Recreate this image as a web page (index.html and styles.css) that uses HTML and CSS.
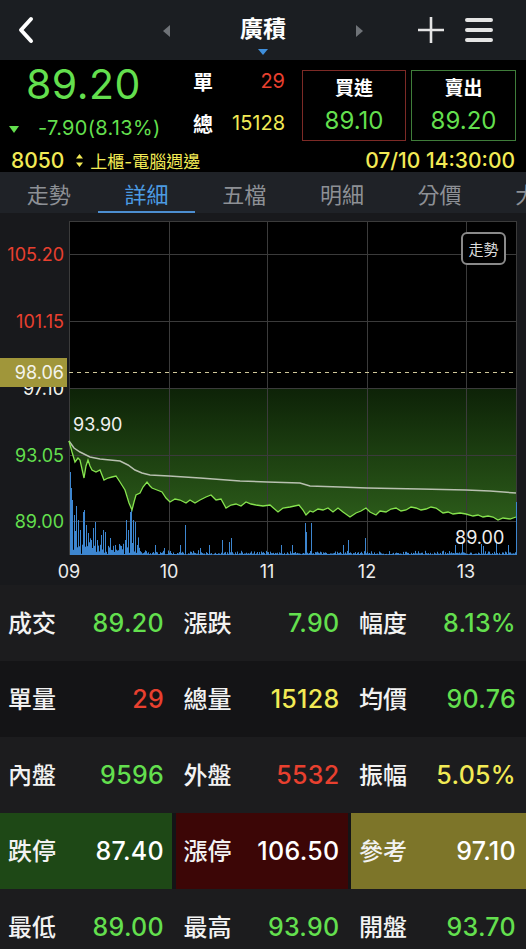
FILE: index.html
```html
<!DOCTYPE html>
<html lang="zh-Hant">
<head>
<meta charset="UTF-8">
<meta name="viewport" content="width=device-width, initial-scale=1.0">
<title>廣積 8050</title>
<link rel="stylesheet" href="styles.css">
</head>
<body>
<div class="screen">
    <header class="topbar">
        <div class="top-left">
            <svg class="back" width="20" height="30" viewBox="0 0 20 30"><path d="M15 4 L5 15 L15 26" fill="none" stroke="#fff" stroke-width="4" stroke-linecap="round" stroke-linejoin="round"/></svg>
        </div>
        <div class="stock-switch">
            <span class="nav-tri nav-left"></span>
            <div class="stock-name">廣積<span class="drop"></span></div>
            <span class="nav-tri nav-right"></span>
        </div>
        <div class="top-actions">
            <svg width="28" height="28" viewBox="0 0 28 28"><path d="M14 1 V27 M1 14 H27" stroke="#e4e4e4" stroke-width="2.6"/></svg>
            <svg width="28" height="26" viewBox="0 0 28 26"><path d="M2 3 H26 M2 13 H26 M2 23 H26" stroke="#e4e4e4" stroke-width="4" stroke-linecap="round"/></svg>
        </div>
    </header>

    <section class="quote">
        <div class="quote-top">
            <div class="last">
                <div class="last-price green">89.20</div>
                <div class="last-change green"><span class="down-tri"></span>-7.90(8.13%)</div>
            </div>
            <div class="volumes">
                <div class="vol-row"><span class="vol-label">單</span><span class="red">29</span></div>
                <div class="vol-row"><span class="vol-label">總</span><span class="yellow">15128</span></div>
            </div>
            <div class="order-box buy">
                <div class="order-label">買進</div>
                <div class="order-price green">89.10</div>
            </div>
            <div class="order-box sell">
                <div class="order-label">賣出</div>
                <div class="order-price green">89.20</div>
            </div>
        </div>
        <div class="quote-foot">
            <div class="code">
                <span class="code-num">8050</span>
                <svg class="code-icon" width="7" height="13" viewBox="0 0 7 13"><path d="M3.5 0 L7 4.5 H0 Z M0 8.5 H7 L3.5 13 Z" fill="#f2ea55"/></svg>
                <span class="code-cat">上櫃-電腦週邊</span>
            </div>
            <div class="time">07/10 14:30:00</div>
        </div>
    </section>

    <nav class="tabs">
        <a class="tab">走勢</a>
        <a class="tab active">詳細</a>
        <a class="tab">五檔</a>
        <a class="tab">明細</a>
        <a class="tab">分價</a>
        <a class="tab">大單</a>
    </nav>

    <section class="chart">
        <svg class="chart-svg" width="526" height="372" viewBox="0 213 526 372">
            <defs>
                <linearGradient id="area" gradientUnits="userSpaceOnUse" x1="0" y1="388" x2="0" y2="522">
                    <stop offset="0" stop-color="#0d2207"/>
                    <stop offset="1" stop-color="#2c5c1a"/>
                </linearGradient>
            </defs>
            <rect x="69" y="221" width="448" height="334" fill="#000"/>
            <path fill="url(#area)" d="M69 388 L69 441 L72 452 L75 462 L78 458 L80 460 L84 478 L86 466 L88 460 L90 466 L92 470 L96 472 L100 470 L104 480 L108 478 L112 477 L116 476 L120 482 L125 490 L129 503 L132 510 L134 502 L136 495 L140 493 L143 487 L147 482 L150 486 L152 488 L157 490 L162 492 L166 498 L170 502 L175 499 L180 500 L186 503 L190 500 L195 503 L200 500 L206 497 L211 495 L216 500 L221 499 L226 508 L231 505 L236 504 L241 506 L246 502 L251 504 L256 505 L263 506 L270 505 L278 512 L283 508 L290 507 L299 505 L303 510 L306 515 L310 511 L313 512 L318 509 L323 510 L328 508 L333 512 L338 508 L343 512 L350 517 L356 513 L361 511 L366 508 L370 512 L376 515 L380 511 L386 512 L391 509 L396 508 L401 511 L406 510 L411 507 L416 508 L421 510 L426 509 L431 507 L436 508 L443 513 L448 512 L453 514 L460 513 L466 514 L473 516 L478 515 L483 517 L488 516 L493 517 L498 520 L503 518 L510 519 L516 517 L517 517 L517 388 Z"/>
            <g class="grid">
                <path d="M69 254.5 H517 M69 321.5 H517 M69 388.5 H517 M69 455.5 H517 M69 521.5 H517"/>
                <path d="M169.5 221 V555 M267.5 221 V555 M367.5 221 V555 M466.5 221 V555"/>
                <rect x="69.5" y="221.5" width="447" height="333" fill="none"/>
            </g>
            <path id="vol" class="vol" d=""/>
            <polyline class="avg-line" points="69,441 74,448 80,452 90,457 100,459 110,460 120,461 128,465 135,470 142,473 150,475 169,476 200,478 240,481 267,482 300,483 310,486 340,487 367,488 420,489 466,490 490,491 516,493"/>
            <polyline class="price-line" points="69,441 72,452 75,462 78,458 80,460 84,478 86,466 88,460 90,466 92,470 96,472 100,470 104,480 108,478 112,477 116,476 120,482 125,490 129,503 132,510 134,502 136,495 140,493 143,487 147,482 150,486 152,488 157,490 162,492 166,498 170,502 175,499 180,500 186,503 190,500 195,503 200,500 206,497 211,495 216,500 221,499 226,508 231,505 236,504 241,506 246,502 251,504 256,505 263,506 270,505 278,512 283,508 290,507 299,505 303,510 306,515 310,511 313,512 318,509 323,510 328,508 333,512 338,508 343,512 350,517 356,513 361,511 366,508 370,512 376,515 380,511 386,512 391,509 396,508 401,511 406,510 411,507 416,508 421,510 426,509 431,507 436,508 443,513 448,512 453,514 460,513 466,514 473,516 478,515 483,517 488,516 493,517 498,520 503,518 510,519 516,517"/>
            <path class="ref-line" d="M69 372.5 H517"/>

            <text class="axis red-fill" x="64" y="260.5">105.20</text>
            <text class="axis red-fill" x="64" y="327.5">101.15</text>
            <text class="axis white-fill" x="64" y="394.5">97.10</text>
            <rect x="0" y="358" width="67" height="29" fill="#a0963a"/>
            <text class="axis white-fill" x="64" y="378.5">98.06</text>
            <text class="axis green-fill" x="64" y="461.5">93.05</text>
            <text class="axis green-fill" x="64" y="527.5">89.00</text>

            <text class="mark" x="73" y="430.5">93.90</text>
            <text class="mark" x="455" y="543.5">89.00</text>

            <text class="time-label" x="69" y="578">09</text>
            <text class="time-label" x="169" y="578">10</text>
            <text class="time-label" x="267" y="578">11</text>
            <text class="time-label" x="367" y="578">12</text>
            <text class="time-label" x="466" y="578">13</text>
        </svg>
        <span class="chart-toggle">走勢</span>
    </section>

    <section class="stats">
        <div class="stat-row">
            <div class="stat"><span class="stat-label">成交</span><span class="stat-value green">89.20</span></div>
            <div class="stat"><span class="stat-label">漲跌</span><span class="stat-value green">7.90</span></div>
            <div class="stat"><span class="stat-label">幅度</span><span class="stat-value green">8.13%</span></div>
        </div>
        <div class="stat-row">
            <div class="stat"><span class="stat-label">單量</span><span class="stat-value red">29</span></div>
            <div class="stat"><span class="stat-label">總量</span><span class="stat-value yellow">15128</span></div>
            <div class="stat"><span class="stat-label">均價</span><span class="stat-value green">90.76</span></div>
        </div>
        <div class="stat-row">
            <div class="stat"><span class="stat-label">內盤</span><span class="stat-value green">9596</span></div>
            <div class="stat"><span class="stat-label">外盤</span><span class="stat-value red">5532</span></div>
            <div class="stat"><span class="stat-label">振幅</span><span class="stat-value yellow">5.05%</span></div>
        </div>
        <div class="stat-row">
            <div class="stat limit-down"><span class="stat-label">跌停</span><span class="stat-value">87.40</span></div>
            <div class="stat limit-up"><span class="stat-label">漲停</span><span class="stat-value">106.50</span></div>
            <div class="stat ref"><span class="stat-label">參考</span><span class="stat-value">97.10</span></div>
        </div>
        <div class="stat-row">
            <div class="stat"><span class="stat-label">最低</span><span class="stat-value green">89.00</span></div>
            <div class="stat"><span class="stat-label">最高</span><span class="stat-value green">93.90</span></div>
            <div class="stat"><span class="stat-label">開盤</span><span class="stat-value green">93.70</span></div>
        </div>
    </section>
</div>

<script>
(function () {
    // volume bars: a few real spikes, the rest is small noise
    var spikes = {70: 472, 71: 488, 72: 500, 74: 515, 76: 506, 78: 520, 80: 530, 83: 512, 84: 510, 86: 525,
        88: 533, 91: 540, 93: 528, 95: 522, 97: 540, 101: 535, 103: 530, 105: 532, 110: 538, 115: 545,
        125: 540, 126: 520, 128: 530, 130: 512, 131: 510, 133: 520, 135: 522, 137: 545, 155: 545, 164: 548,
        180: 545, 185: 525, 200: 548, 209: 545, 222: 540, 229: 542, 231: 538, 281: 545, 292: 545, 305: 523,
        306: 532, 311: 523, 343: 545, 348: 540, 365: 538, 455: 545, 462: 542, 481: 544, 483: 546, 496: 543,
        508: 545, 516: 502};
    var seed = 11;
    function rand() {
        seed = (seed * 9301 + 49297) % 233280;
        return seed / 233280;
    }
    var d = '';
    for (var x = 70; x <= 516; x++) {
        var amp = 3 + 34 * Math.exp(-(x - 70) / 24);
        if (x > 118 && x < 140) amp += 16;
        var top = 555 - (0.5 + amp * rand() * (0.4 + rand()));
        if (spikes[x]) top = spikes[x];
        d += 'M' + (x + 0.5) + ' 555V' + top.toFixed(1);
    }
    document.getElementById('vol').setAttribute('d', d);
})();
</script>
</body>
</html>
```

FILE: styles.css
```css
body {
    margin: 0;
    background: #000;
    font-family: Inter, "Noto Sans CJK TC", sans-serif;
    color: #f0f0f0;
}
.screen {
    width: 526px;
    height: 949px;
    overflow: hidden;
    background: #000;
}

.green { color: #63df4e; }
.red { color: #e8402f; }
.yellow { color: #f2ea55; }

/* top bar */
.topbar {
    height: 60px;
    background: #1b1e22;
    display: grid;
    grid-template-columns: 1fr auto 1fr;
    align-items: center;
}
.top-left {
    padding-left: 16px;
    display: flex;
}
.stock-switch {
    display: flex;
    align-items: center;
    gap: 70px;
}
.nav-tri {
    width: 0;
    height: 0;
    border-top: 6px solid transparent;
    border-bottom: 6px solid transparent;
    margin-top: 2px;
}
.nav-left { border-right: 7px solid #6f7378; }
.nav-right { border-left: 7px solid #6f7378; }
.stock-name {
    display: flex;
    flex-direction: column;
    align-items: center;
    font-size: 23px;
    font-weight: 700;
    line-height: 30px;
    padding-top: 8px;
    color: #fff;
}
.drop {
    width: 0;
    height: 0;
    margin-top: 5px;
    border-left: 5px solid transparent;
    border-right: 5px solid transparent;
    border-top: 6px solid #3f8fdc;
}
.top-actions {
    display: flex;
    justify-content: flex-end;
    align-items: center;
    gap: 20px;
    padding-right: 33px;
}

/* quote */
.quote {
    height: 112px;
    background: #000;
}
.quote-top {
    height: 88px;
    box-sizing: border-box;
    padding-top: 2px;
    display: flex;
}
.last {
    width: 188px;
    padding-left: 8px;
    box-sizing: border-box;
}
.last-price {
    font-size: 41px;
    line-height: 44px;
    padding-left: 18px;
    letter-spacing: 0.5px;
}
.last-change {
    margin-top: 10px;
    font-size: 20px;
    line-height: 24px;
    display: flex;
    align-items: center;
    letter-spacing: 0.3px;
}
.down-tri {
    width: 0;
    height: 0;
    border-left: 5px solid transparent;
    border-right: 5px solid transparent;
    border-top: 7px solid #63df4e;
    margin: 2px 19px 0 1px;
}
.volumes {
    width: 92px;
    margin-left: 5px;
    display: flex;
    flex-direction: column;
    gap: 4px;
}
.vol-row {
    height: 38px;
    display: flex;
    justify-content: space-between;
    align-items: center;
    font-size: 20px;
}
.vol-label {
    font-weight: 700;
    color: #fff;
}
.order-box {
    margin-top: 8px;
    width: 104px;
    height: 71px;
    box-sizing: border-box;
    display: flex;
    flex-direction: column;
    align-items: center;
    padding-top: 6px;
}
.buy {
    margin-left: 17px;
    border: 1.5px solid #7d2a26;
}
.sell {
    margin-left: 5px;
    width: 105px;
    border: 1.5px solid #3f7d3a;
}
.order-label {
    font-size: 19px;
    font-weight: 700;
    line-height: 24px;
    color: #fff;
}
.order-price {
    margin-top: 6px;
    font-size: 24px;
    line-height: 28px;
}
.quote-foot {
    height: 24px;
    display: flex;
    justify-content: space-between;
    align-items: center;
    padding: 0 11px;
    color: #f2ea55;
}
.code {
    display: flex;
    align-items: center;
}
.code-num {
    font-size: 21px;
    font-weight: 500;
}
.code-icon {
    margin: 0 7px 0 12px;
}
.code-cat {
    font-size: 17px;
}
.time {
    font-size: 21px;
    font-weight: 500;
}

/* tabs */
.tabs {
    height: 41px;
    background: #1f2227;
    display: flex;
    overflow: hidden;
}
.tab {
    flex: 0 0 97.7px;
    display: flex;
    align-items: center;
    justify-content: center;
    font-size: 22px;
    color: #8d9095;
    box-sizing: border-box;
    border-bottom: 2px solid transparent;
    padding-top: 2px;
}
.tab.active {
    color: #4c9be2;
    border-bottom-color: #4c8ed0;
}

/* chart */
.chart {
    position: relative;
    height: 372px;
    background: #18191c;
}
.chart-svg {
    display: block;
}
.grid path,
.grid rect {
    stroke: #3b3b3b;
    stroke-width: 1;
    fill: none;
}
.vol {
    stroke: #3d86d0;
    stroke-width: 1;
    fill: none;
}
.avg-line {
    fill: none;
    stroke: #b8c0b0;
    stroke-width: 1.5;
}
.price-line {
    fill: none;
    stroke: #86e34e;
    stroke-width: 1.3;
}
.ref-line {
    stroke: #cfc79a;
    stroke-width: 1;
    stroke-dasharray: 4 4;
}
.axis {
    font-family: Inter, sans-serif;
    font-size: 18px;
    text-anchor: end;
}
.red-fill { fill: #e8402f; }
.green-fill { fill: #63df4e; }
.white-fill { fill: #f4f4ec; }
.mark {
    font-family: Inter, sans-serif;
    font-size: 18px;
    fill: #f0f0f0;
}
.time-label {
    font-family: Inter, sans-serif;
    font-size: 18px;
    fill: #ececec;
    text-anchor: middle;
}
.chart-toggle {
    position: absolute;
    top: 19px;
    right: 20px;
    width: 45px;
    height: 33px;
    box-sizing: border-box;
    border: 2px solid #8a8a8a;
    border-radius: 6px;
    display: flex;
    align-items: center;
    justify-content: center;
    font-size: 15px;
    color: #dcdcdc;
    background: #000;
}

/* stats */
.stat-row {
    height: 76px;
    display: grid;
    grid-template-columns: 172px 172px 1fr;
    column-gap: 3.5px;
    background: #1c1c1e;
}
.stat-row:nth-child(even) {
    background: #141416;
}
.stat {
    display: flex;
    justify-content: space-between;
    align-items: center;
    padding: 0 8px;
}
.stat:last-child {
    padding-right: 10px;
}
.stat-label {
    font-size: 24px;
    font-weight: 500;
    color: #f2f2f2;
    padding-bottom: 4px;
}
.stat-value {
    font-size: 25px;
    font-weight: 500;
    letter-spacing: 0.3px;
}
.limit-down { background: #1e4816; }
.limit-up { background: #3c0606; }
.ref { background: #7d7529; }
.limit-down .stat-value,
.limit-up .stat-value,
.ref .stat-value {
    color: #fff;
}
```
